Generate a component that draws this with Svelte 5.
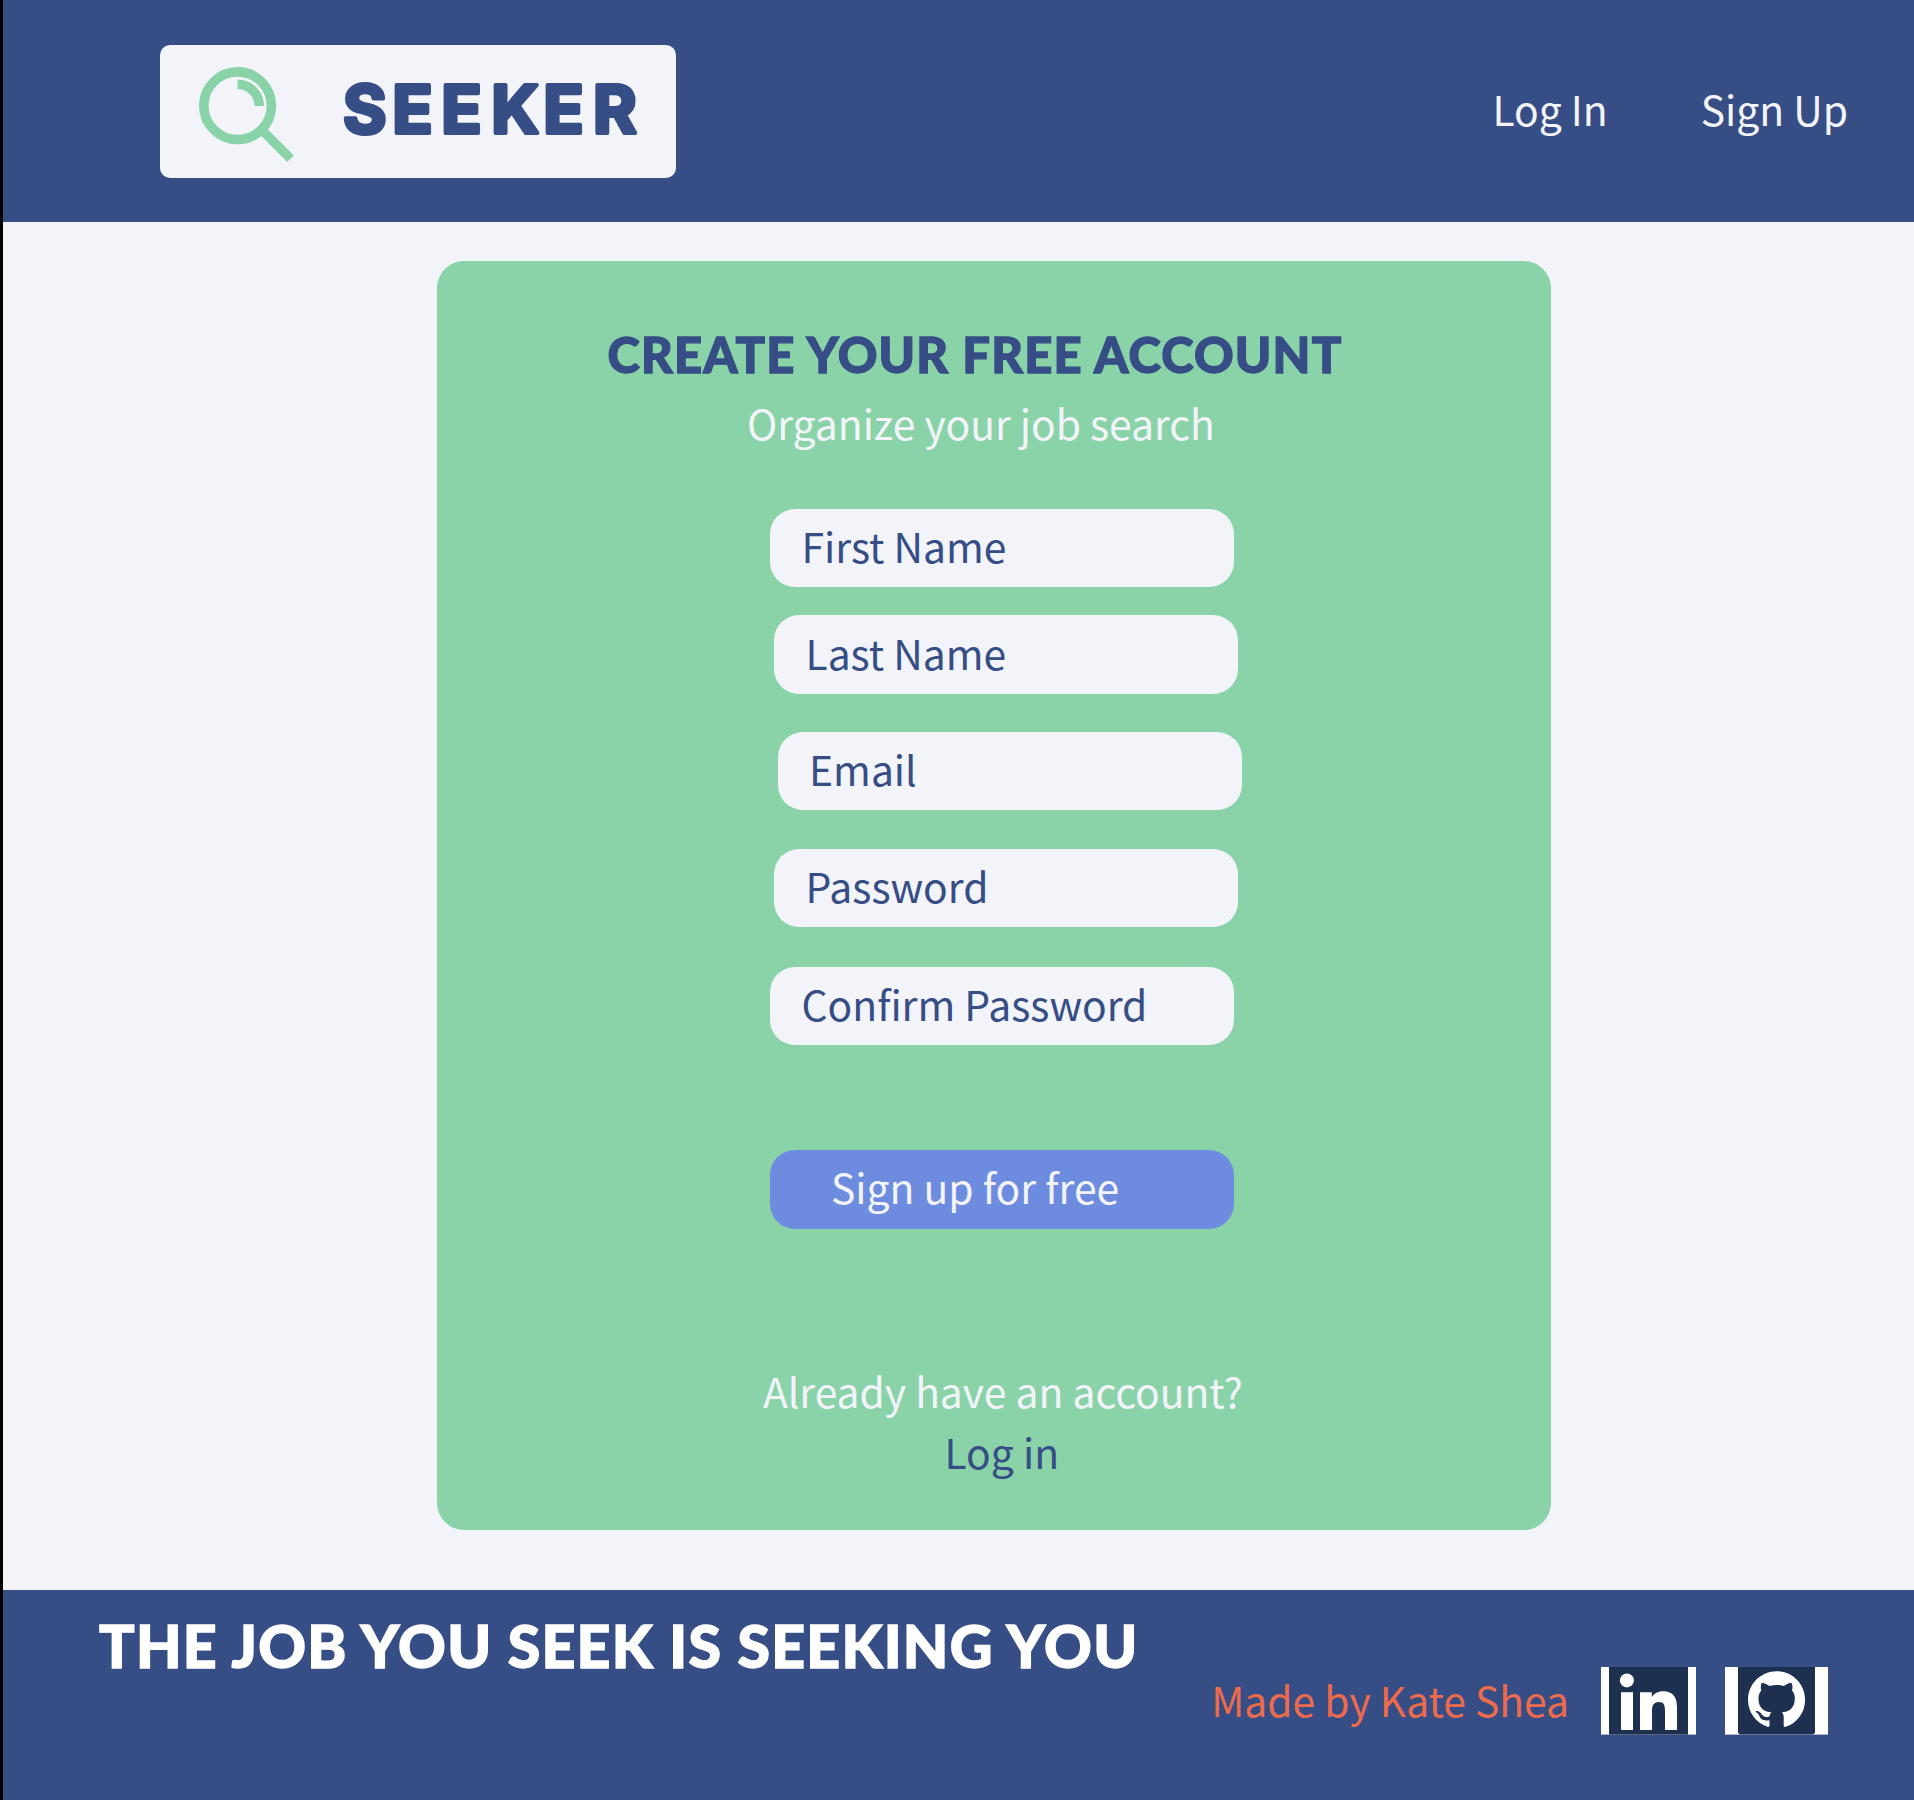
<script>
  const fields = [
    { label: 'First Name', name: 'first' },
    { label: 'Last Name', name: 'last' },
    { label: 'Email', name: 'email' },
    { label: 'Password', name: 'password' },
    { label: 'Confirm Password', name: 'confirm' }
  ];
</script>

<div class="page">
  <header>
    <div class="logo">
      <svg width="516" height="133" viewBox="160 45 516 133">
        <g fill="none" stroke="#8ad3a9" stroke-width="9.6">
          <circle cx="237.6" cy="105.7" r="33.8" />
          <path d="M237.6 84.2A21.6 21.8 0 0 1 259.2 106" />
          <path d="M264.4 132.5L290.5 158.7" stroke-width="9.4" />
        </g>
        <text class="brand" y="133.2" x="343 392.3 441.3 491.3 543.3 593">SEEKER</text>
      </svg>
    </div>
    <nav>
      <span>Log In</span>
      <span>Sign Up</span>
    </nav>
  </header>

  <main>
    <section class="card">
      <h1>CREATE YOUR FREE ACCOUNT</h1>
      <p class="sub">Organize your job search</p>
      {#each fields as f}
        <div class="field {f.name}"><span>{f.label}</span></div>
      {/each}
      <div class="field submit"><span>Sign up for free</span></div>
      <p class="already">Already have an account?</p>
      <p class="login">Log in</p>
    </section>
  </main>

  <footer>
    <h2>THE JOB YOU SEEK IS SEEKING YOU</h2>
    <div class="credit">
      <span class="made">Made by Kate Shea</span>
      <svg class="icon" width="95" height="68" viewBox="0 0 95 68">
        <rect width="95" height="67.6" fill="#fff" />
        <rect x="8" width="79" height="67.6" fill="#1e3050" />
        <g fill="#fff">
          <circle cx="25.9" cy="13.4" r="7" />
          <rect x="20" y="25.2" width="12" height="37.8" />
          <path d="M39 25.2H50.8V30.2C53 26.6 56.7 24.3 62 24.3C72.5 24.3 76 30.8 76 40.5V63H64V43.5C64 38.3 62.8 35 58 35C53.2 35 51 38.3 51 43.5V63H39Z" />
        </g>
      </svg>
      <svg class="icon" width="103" height="68" viewBox="0 0 103 68">
        <rect width="103" height="67.6" fill="#fff" />
        <path d="M13 0H90V65.6L88.5 67.6H14.5L13 65.6Z" fill="#1e3050" />
        <path transform="translate(23 4.2) scale(3.57)" fill="#fff" d="M8 0C3.58 0 0 3.58 0 8c0 3.54 2.29 6.53 5.47 7.59.4.07.55-.17.55-.38 0-.19-.01-.82-.01-1.49-2.01.37-2.53-.49-2.69-.94-.09-.23-.48-.94-.82-1.13-.28-.15-.68-.52-.01-.53.63-.01 1.08.58 1.23.82.72 1.21 1.87.87 2.33.66.07-.52.28-.87.51-1.07-1.78-.2-3.64-.89-3.64-3.95 0-.87.31-1.59.82-2.15-.08-.2-.36-1.02.08-2.12 0 0 .67-.21 2.2.82.64-.18 1.32-.27 2-.27s1.36.09 2 .27c1.53-1.04 2.2-.82 2.2-.82.44 1.1.16 1.92.08 2.12.51.56.82 1.27.82 2.15 0 3.07-1.87 3.75-3.65 3.95.29.25.54.73.54 1.48 0 1.07-.01 1.93-.01 2.2 0 .21.15.46.55.38A8.01 8.01 0 0 0 16 8c0-4.42-3.58-8-8-8z" />
      </svg>
    </div>
  </footer>
</div>

<style>
  :global(body) {
    margin: 0;
    background: #f2f4f9;
  }
  .page {
    box-sizing: border-box;
    height: 1800px;
    border-left: 3px solid #000;
    display: flex;
    flex-direction: column;
    overflow: hidden;
    background: #f2f4f9;
    color: #f2f4f9;
    font: 40.8px/60px 'Noto Sans CJK SC', 'Noto Sans', sans-serif;
    white-space: nowrap;
  }
  h1, h2, p {
    margin: 0;
  }
  header {
    height: 222px;
    flex: none;
    box-sizing: border-box;
    background: #364d85;
    display: flex;
    justify-content: space-between;
    align-items: flex-start;
    padding: 45px 66px 0 157px;
  }
  .logo {
    width: 516px;
    height: 133px;
    border-radius: 10px;
    background: #f2f4f9;
  }
  .logo svg {
    display: block;
  }
  .brand {
    font: 750 66.5px Inter, sans-serif;
    fill: #364d85;
    stroke: #364d85;
    stroke-width: 4px;
    stroke-linejoin: round;
  }
  nav {
    display: flex;
    gap: 93px;
    margin-top: 33.5px;
  }
  main {
    height: 1368px;
    flex: none;
    display: flex;
    align-items: flex-start;
    padding: 39.3px 0 0 434px;
    box-sizing: border-box;
  }
  .card {
    width: 1114.4px;
    height: 1268.7px;
    box-sizing: border-box;
    padding-top: 62.7px;
    border-radius: 27px;
    background: #8ad3a9;
  }
  h1 {
    margin-left: 170.5px;
    font: 900 49px/60px Lato, sans-serif;
    letter-spacing: 1.2px;
    color: #364d85;
    -webkit-text-stroke: 1.3px #364d85;
  }
  .sub {
    margin: 9px 0 56px 310px;
    letter-spacing: -0.03px;
  }
  .field {
    display: flex;
    align-items: center;
    box-sizing: border-box;
    width: 464px;
    height: 78.4px;
    margin-left: 333px;
    padding: 0 31.5px 4px;
    border-radius: 25px;
    background: #f2f4f9;
    color: #364d85;
  }
  .last {
    margin: 28px 0 0 337px;
  }
  .email {
    margin: 38px 0 0 340.6px;
  }
  .password {
    margin: 38.9px 0 0 337px;
  }
  .confirm {
    margin-top: 39.1px;
  }
  .submit {
    margin-top: 105.2px;
    padding-left: 61px;
    background: #6e8cdf;
    color: #f2f4f9;
  }
  .already {
    margin: 132px 0 0 326px;
    letter-spacing: -0.03px;
  }
  .login {
    margin: 1.4px 0 0 507.5px;
    color: #364d85;
  }
  footer {
    flex: 1;
    display: flex;
    justify-content: space-between;
    align-items: flex-start;
    background: #364d85;
    padding: 0 86px 0 96px;
  }
  h2 {
    margin-top: 20px;
    font: 900 59px/72px Lato, sans-serif;
    letter-spacing: 1.26px;
    color: #fff;
    -webkit-text-stroke: 1.4px #fff;
  }
  .credit {
    display: flex;
    align-items: flex-start;
    padding-top: 77px;
  }
  .made {
    margin: 3px 32px 0 0;
    color: #ec6b4c;
  }
  .icon + .icon {
    margin-left: 29px;
  }
</style>
